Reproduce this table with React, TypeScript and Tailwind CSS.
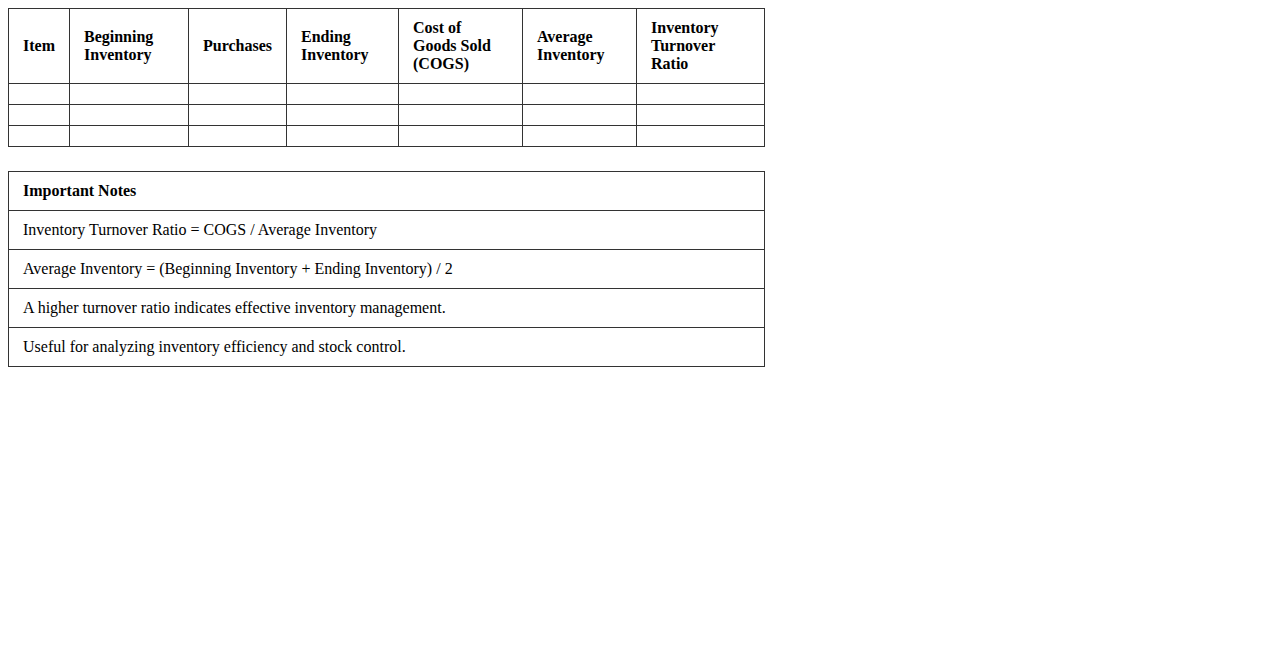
import React from "react";

const heads = [
  "Item",
  "Beginning Inventory",
  "Purchases",
  "Ending Inventory",
  "Cost of Goods Sold (COGS)",
  "Average Inventory",
  "Inventory Turnover Ratio",
];

// anchos medidos de borde a borde
const widths = ["w-[61px]", "w-[119px]", "w-[98px]", "w-[112px]", "w-[124px]", "w-[114px]", "w-[128px]"];

const notes = [
  "Inventory Turnover Ratio = COGS / Average Inventory",
  "Average Inventory = (Beginning Inventory + Ending Inventory) / 2",
  "A higher turnover ratio indicates effective inventory management.",
  "Useful for analyzing inventory efficiency and stock control.",
];

export default function App() {
  return (
    <div className="p-2 text-[16px] text-black bg-white min-h-screen" style={{ fontFamily: '"Liberation Serif", "Times New Roman", serif', lineHeight: "normal" }}>
      <table className="border-collapse table-fixed w-[757px]">
        <colgroup>
          {widths.map((w, i) => (
            <col key={i} className={w} />
          ))}
        </colgroup>
        <thead>
          <tr>
            {heads.map(h => (
              <th key={h} className="border border-[#333] pl-[14px] pr-[15px] py-[10px] text-left font-bold align-middle">
                {h}
              </th>
            ))}
          </tr>
        </thead>
        <tbody>
          {[0, 1, 2].map(r => (
            <tr key={r}>
              {heads.map(h => (
                <td key={h} className="border border-[#333] pl-[14px] pr-[15px] py-[10px]"></td>
              ))}
            </tr>
          ))}
        </tbody>
      </table>

      <table className="border-collapse w-[757px] mt-6">
        <thead>
          <tr>
            <th className="border border-[#333] pl-[14px] pr-[15px] py-[10px] text-left font-bold">Important Notes</th>
          </tr>
        </thead>
        <tbody>
          {notes.map(n => (
            <tr key={n}>
              <td className="border border-[#333] pl-[14px] pr-[15px] py-[10px]">{n}</td>
            </tr>
          ))}
        </tbody>
      </table>
    </div>
  );
}
